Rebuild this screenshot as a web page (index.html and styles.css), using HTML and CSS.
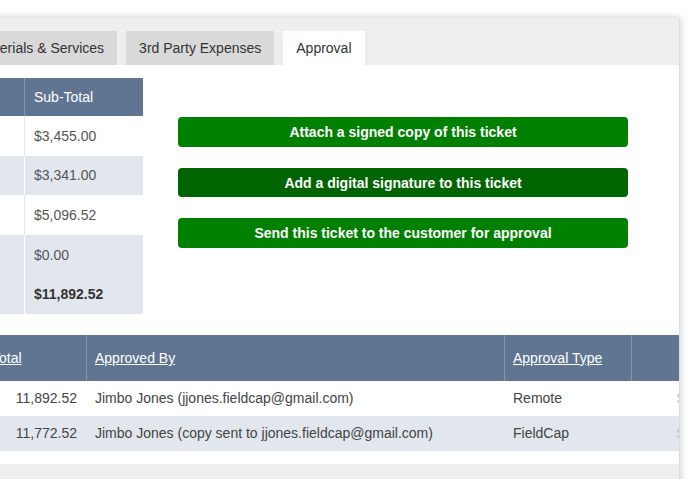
FILE: index.html
```html
<!DOCTYPE html>
<html lang="en">
<head>
    <meta charset="UTF-8">
    <meta name="viewport" content="width=device-width, initial-scale=1.0">
    <title>Ticket Approval</title>
    <link rel="stylesheet" href="styles.css">
</head>
<body>

    <div class="panel">
        <div class="tabs">
            <div class="tab">Materials &amp; Services</div>
            <div class="tab">3rd Party Expenses</div>
            <div class="tab active">Approval</div>
        </div>

        <div class="content">
            <div class="top">
                <table class="summary">
                    <colgroup>
                        <col class="c-label">
                        <col class="c-sub">
                    </colgroup>
                    <tr>
                        <th></th>
                        <th>Sub-Total</th>
                    </tr>
                    <tr>
                        <td></td>
                        <td>$3,455.00</td>
                    </tr>
                    <tr class="alt">
                        <td></td>
                        <td>$3,341.00</td>
                    </tr>
                    <tr>
                        <td></td>
                        <td>$5,096.52</td>
                    </tr>
                    <tr class="alt">
                        <td></td>
                        <td>$0.00</td>
                    </tr>
                    <tr class="alt total">
                        <td></td>
                        <td>$11,892.52</td>
                    </tr>
                </table>

                <div class="actions">
                    <button class="btn">Attach a signed copy of this ticket</button>
                    <button class="btn dark">Add a digital signature to this ticket</button>
                    <button class="btn">Send this ticket to the customer for approval</button>
                </div>
            </div>

            <table class="approvals">
                <colgroup>
                    <col class="c-date">
                    <col class="c-total">
                    <col class="c-by">
                    <col class="c-type">
                    <col class="c-more">
                </colgroup>
                <tr>
                    <th></th>
                    <th><a href="#">Total</a></th>
                    <th><a href="#">Approved By</a></th>
                    <th><a href="#">Approval Type</a></th>
                    <th></th>
                </tr>
                <tr>
                    <td></td>
                    <td class="num">11,892.52</td>
                    <td>Jimbo Jones (jjones.fieldcap@gmail.com)</td>
                    <td>Remote</td>
                    <td class="faint">$</td>
                </tr>
                <tr class="alt">
                    <td></td>
                    <td class="num">11,772.52</td>
                    <td>Jimbo Jones (copy sent to jjones.fieldcap@gmail.com)</td>
                    <td>FieldCap</td>
                    <td class="faint">$</td>
                </tr>
            </table>

            <div class="footer"></div>
        </div>
    </div>

</body>
</html>
```

FILE: styles.css
```css
body {
    margin: 0;
    padding: 0;
    background: #fff;
    font-family: "Liberation Sans", Arial, sans-serif;
    font-size: 14px;
    color: #444;
    overflow: hidden;
}

.panel {
    margin: 18px 20px 0 -60px;
    height: 520px;
    background: #fff;
    box-shadow: 0 0 8px rgba(0, 0, 0, 0.22);
    border-right: 1px solid #ddd;
    overflow: hidden;
}

/* tabs */
.tabs {
    display: flex;
    gap: 9px;
    padding: 13px 0 0 23.5px;
    background: #eeeeee;
}

.tab {
    height: 34px;
    line-height: 34px;
    padding: 0 13px;
    background: #d9d9d9;
    color: #333;
    white-space: nowrap;
}

.tab.active {
    background: #fff;
}

.content {
    padding: 13px 0 0 12px;
}

.top {
    display: flex;
    align-items: flex-start;
}

/* tables */
table {
    border-collapse: separate;
    border-spacing: 0;
    table-layout: fixed;
}

th {
    background: #5f7592;
    color: #fff;
    font-weight: normal;
    text-align: left;
    white-space: nowrap;
}

th a {
    color: #fff;
}

td {
    white-space: nowrap;
    color: #555;
}

tr.alt td {
    background: #e2e7ee;
}

.summary {
    width: 191px;
    margin-right: 35px;
}

.summary .c-label { width: 72px; }
.summary .c-sub { width: 119px; }

.summary th {
    height: 38px;
    padding: 0 9px;
}

.summary td {
    height: 39.6px;
    padding: 0 9px;
}

.summary th + th {
    border-left: 1px solid #8597ae;
}

.summary td + td {
    border-left: 1px solid #e4e8ee;
}

.summary tr.alt td + td {
    border-left-color: #fff;
}

.summary .total td {
    font-weight: bold;
    color: #333;
}

/* buttons */
.actions {
    display: flex;
    flex-direction: column;
    gap: 21px;
    width: 450px;
    padding-top: 39px;
}

.btn {
    height: 30px;
    border: none;
    border-radius: 4px;
    background: #008000;
    color: #fff;
    font-family: "Liberation Sans", Arial, sans-serif;
    font-size: 14px;
    font-weight: bold;
    cursor: pointer;
}

.btn.dark {
    height: 29px;
    background: #006400;
}

.approvals {
    width: 829px;
    margin-top: 21px;
}

.approvals .c-date { width: 31px; }
.approvals .c-total { width: 103px; }
.approvals .c-by { width: 418px; }
.approvals .c-type { width: 127px; }
.approvals .c-more { width: 150px; }

.approvals th {
    height: 46px;
    padding: 0 8px;
}

.approvals th + th {
    border-left: 1px solid #8597ae;
}

.approvals td {
    height: 35px;
    padding: 0 8px;
    color: #444;
}

.approvals td + td {
    border-left: 1px solid transparent;
}

.approvals .num {
    text-align: right;
    padding-right: 9px;
}

.approvals td.faint {
    padding-left: 45px;
    color: #bbb;
}

.footer {
    height: 40px;
    margin-top: 13px;
    background: #eeeeee;
}
```
